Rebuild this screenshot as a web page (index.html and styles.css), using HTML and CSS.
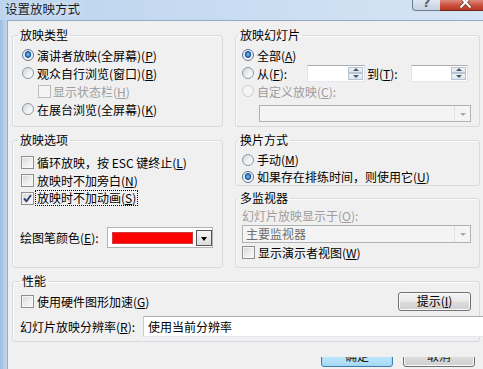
FILE: index.html
```html
<!DOCTYPE html>
<html lang="zh-CN">
<head>
<meta charset="utf-8">
<title>设置放映方式</title>
<link rel="stylesheet" href="styles.css">
</head>
<body>
<div class="window">
  <div class="titlebar">
    <span class="title">设置放映方式</span>
    <div class="caption-btns">
      <span class="cbtn help"><span class="q">?</span></span>
      <span class="cbtn close">
        <svg width="43" height="11" viewBox="0 0 43 11"><path d="M20.5 -3 L30.5 7.5 M30.5 -3 L20.5 7.5" stroke="#6b2a20" stroke-width="3.4" fill="none"/><path d="M20.5 -3 L30.5 7.5 M30.5 -3 L20.5 7.5" stroke="#fff" stroke-width="2.2" fill="none"/></svg>
      </span>
    </div>
  </div>
  <div class="frame">
    <div class="client">
      <div class="grid">
        <fieldset class="group">
          <legend>放映类型</legend>
          <div class="gbody pad-type">
            <div class="row"><span class="radio on"></span><span>演讲者放映(全屏幕)(<u>P</u>)</span></div>
            <div class="row"><span class="radio"></span><span>观众自行浏览(窗口)(<u>B</u>)</span></div>
            <div class="row indent dis"><span class="chk dis"></span><span>显示状态栏(<u>H</u>)</span></div>
            <div class="row"><span class="radio"></span><span>在展台浏览(全屏幕)(<u>K</u>)</span></div>
          </div>
        </fieldset>

        <fieldset class="group right">
          <legend>放映幻灯片</legend>
          <div class="gbody pad-right">
            <div class="row"><span class="radio on"></span><span>全部(<u>A</u>)</span></div>
            <div class="row">
              <span class="radio"></span><span class="lbl-from">从(<u>F</u>):</span>
              <span class="spin w58"><span class="spin-btns"><span class="up"></span><span class="dn"></span></span></span>
              <span class="lbl-to">到(<u>T</u>):</span>
              <span class="spin w57"><span class="spin-btns"><span class="up"></span><span class="dn"></span></span></span>
            </div>
            <div class="row dis"><span class="radio dis"></span><span>自定义放映(<u>C</u>):</span></div>
            <div class="combo dis custom"><span class="combo-text"></span><span class="combo-arrow"></span></div>
          </div>
        </fieldset>

        <fieldset class="group">
          <legend>放映选项</legend>
          <div class="gbody pad-opts">
            <div class="row"><span class="chk"></span><span>循环放映，按 ESC 键终止(<u>L</u>)</span></div>
            <div class="row"><span class="chk"></span><span>放映时不加旁白(<u>N</u>)</span></div>
            <div class="row"><span class="chk on"><svg width="11" height="11" viewBox="0 0 11 11"><path d="M2 5.5 L4.5 8.2 L9 2" stroke="#2f4277" stroke-width="1.9" fill="none"/></svg></span><span class="focus">放映时不加动画(<u>S</u>)</span></div>
            <div class="pen-row">
              <span class="pen-lbl">绘图笔颜色(<u>E</u>):</span>
              <span class="picker"><span class="swatch"></span><span class="pick-btn"></span></span>
            </div>
          </div>
        </fieldset>

        <div class="rightstack">
          <fieldset class="group right">
            <legend>换片方式</legend>
            <div class="gbody pad-adv">
              <div class="row r17"><span class="radio"></span><span>手动(<u>M</u>)</span></div>
              <div class="row r17"><span class="radio on"></span><span>如果存在排练时间，则使用它(<u>U</u>)</span></div>
            </div>
          </fieldset>
          <fieldset class="group right grow">
            <legend>多监视器</legend>
            <div class="gbody pad-mon">
              <div class="row r17 dis"><span>幻灯片放映显示于(<u>O</u>):</span></div>
              <div class="combo dis monitor"><span class="combo-text">主要监视器</span><span class="combo-arrow"></span></div>
              <div class="row r19"><span class="chk"></span><span>显示演示者视图(<u>W</u>)</span></div>
            </div>
          </fieldset>
        </div>

        <fieldset class="group perf">
          <legend>性能</legend>
          <div class="gbody pad-perf">
            <div class="perf-row">
              <div class="row"><span class="chk"></span><span>使用硬件图形加速(<u>G</u>)</span></div>
              <span class="btn tip">提示(<u>I</u>)</span>
            </div>
            <div class="res-row">
              <span class="res-lbl">幻灯片放映分辨率(<u>R</u>):</span>
              <span class="res-input">使用当前分辨率</span>
            </div>
          </div>
        </fieldset>
      </div>

      <div class="btnrow">
        <span class="btn dlg default">确定</span>
        <span class="btn dlg">取消</span>
      </div>
    </div>
  </div>
</div>
</body>
</html>
```

FILE: styles.css
```css
* { box-sizing: border-box; }
html, body { margin: 0; padding: 0; }
body {
  width: 483px;
  height: 369px;
  overflow: hidden;
  font-family: "Noto Sans CJK SC", "Noto Sans", sans-serif;
  font-size: 12px;
  color: #000;
}
u { text-decoration: underline; text-underline-offset: 1px; }

.window {
  width: 483px;
  height: 369px;
  display: flex;
  flex-direction: column;
  background: linear-gradient(90deg, #bcd4ee 0%, #c9dcf1 50%, #d6e5f5 100%);
}

.titlebar {
  height: 20px;
  display: flex;
  justify-content: space-between;
  align-items: flex-start;
  flex: none;
}
.title {
  padding-left: 5px;
  line-height: 17px;
  font-size: 12.5px;
  color: #1b1b1b;
  text-shadow: 0 0 6px #eef5fc;
  white-space: nowrap;
}
.caption-btns { display: flex; }
.cbtn { display: flex; height: 11px; overflow: hidden; }
.help {
  width: 28px;
  border: 1px solid #6e7e92;
  border-top: none;
  border-right: none;
  border-radius: 0 0 0 4px;
  background: linear-gradient(#dfe7f0, #c3d1e1);
  justify-content: center;
  align-items: flex-end;
}
.help .q {
  font-family: "DejaVu Sans", sans-serif;
  font-weight: bold;
  font-size: 13px;
  line-height: 13px;
  color: #55657a;
  margin-bottom: 1px;
}
.close {
  width: 43px;
  border-bottom: 1px solid #6f2418;
  background: linear-gradient(#e08c7c, #c94a36 60%, #b83a27);
}

.frame {
  flex: 1;
  display: flex;
  padding-left: 7px;
  background: linear-gradient(90deg, #9dbde2 0, #b4cdea 4px, #c3d7ee 7px);
}
.client {
  flex: 1;
  min-width: 0;
  background: #f0f0f0;
  border-top: 1px solid #94abc6;
  border-left: 1px solid #94abc6;
  padding: 7px 3px 0 4px;
  display: flex;
  flex-direction: column;
}

.grid {
  display: grid;
  grid-template-columns: 211px 245px;
  grid-template-rows: 99px 135px 68px;
  column-gap: 12px;
  row-gap: 6px;
}

.group {
  margin: 0;
  padding: 0;
  min-width: 0;
  border: 1px solid #d5dbe0;
  border-radius: 3px;
  box-shadow: inset 1px 1px 0 #fbfbfb;
}
.group legend {
  font-size: 12px;
  line-height: 14px;
  padding: 0 2px;
  margin-left: 5px;
}
.group.right legend { margin-left: 2px; }
.group.perf { grid-column: 1 / span 2; }
.group.perf legend { margin-left: 7px; }

.rightstack { display: flex; flex-direction: column; gap: 5px; }
.rightstack .grow { flex: 1; }

.gbody { display: flex; flex-direction: column; }
.pad-type { padding: 4px 0 0 9px; }
.pad-right { padding: 4px 0 0 6px; }
.pad-opts { padding: 6px 0 0 8px; }
.pad-adv { padding: 4px 0 0 6px; }
.pad-mon { padding: 2px 0 0 6px; }
.pad-perf { padding: 3px 8px 0 7px; }

.row {
  display: flex;
  align-items: center;
  height: 18px;
  white-space: nowrap;
}
.row.r17 { height: 17px; }
.row.r19 { height: 19px; }
.row.indent { padding-left: 16px; }
.dis { color: #9d9d9d; }

.radio {
  flex: none;
  width: 12px;
  height: 12px;
  border-radius: 50%;
  border: 1px solid #8d96a0;
  background: linear-gradient(135deg, #d2d7dc 0%, #eef0f2 55%, #ffffff 100%);
  margin-right: 3px;
}
.radio.on {
  border-color: #5a7390;
  background: radial-gradient(circle at 50% 45%, #8fd0f6 0, #3f86cf 1.6px, #1b4f93 3px, #e3eaf2 3.6px, #f4f6f8 4.6px, #ffffff 6px);
}
.radio.dis {
  border-color: #c8cdd2;
  background: #f4f4f4;
}

.chk {
  flex: none;
  width: 13px;
  height: 13px;
  border: 1px solid #8e8f8f;
  background: linear-gradient(135deg, #d4d4d4 0%, #ececec 50%, #fbfbfb 100%);
  box-shadow: inset 0 0 0 1px #f6f6f6;
  margin-right: 3px;
  display: flex;
  align-items: center;
  justify-content: center;
}
.chk.dis {
  border-color: #bcbcbc;
  background: #f4f4f4;
  box-shadow: none;
  margin-right: 2px;
}
.chk.on svg { display: block; }

.focus {
  outline: 1px dotted #000;
  outline-offset: 0;
  line-height: 14px;
  padding: 0 1px;
  margin-left: -1px;
}

.lbl-from { width: 50px; flex: none; }
.lbl-to { width: 46px; padding-left: 2px; flex: none; }
.spin {
  flex: none;
  height: 17px;
  background: #fff;
  border: 1px solid #abadb3;
  border-left-color: #e2e3ea;
  border-right-color: #dbdfe6;
  border-bottom-color: #e3e9ef;
  display: flex;
  justify-content: flex-end;
  padding: 1px;
}
.spin.w58 { width: 58px; }
.spin.w57 { width: 57px; }
.spin-btns {
  width: 15px;
  display: flex;
  flex-direction: column;
}
.spin-btns span {
  flex: 1;
  border: 1px solid #b6c3d2;
  background: linear-gradient(#f2f5f9, #dbe3ec);
  display: flex;
  align-items: center;
  justify-content: center;
}
.spin-btns .up::before {
  content: "";
  border: 3px solid transparent;
  border-bottom: 3px solid #4a5868;
  border-top: none;
}
.spin-btns .dn::before {
  content: "";
  border: 3px solid transparent;
  border-top: 3px solid #4a5868;
  border-bottom: none;
}

.combo {
  display: flex;
  align-items: center;
  border: 1px solid #adb2b5;
  background: #f4f4f4;
}
.combo.custom {
  width: 212px;
  height: 17px;
  margin: 5px 0 0 17px;
}
.combo.monitor {
  width: 229px;
  height: 18px;
  margin-top: 1px;
}
.combo-text { flex: 1; padding-left: 3px; color: #6d6d6d; line-height: 14px; white-space: nowrap; }
.combo-arrow {
  width: 16px;
  align-self: stretch;
  border-left: 1px solid #dfe2e4;
  display: flex;
  align-items: center;
  justify-content: center;
}
.combo-arrow::before {
  content: "";
  border: 3.5px solid transparent;
  border-top: 3.5px solid #a6a6a6;
  border-bottom: none;
  margin-top: 1px;
}

.pen-row {
  display: flex;
  align-items: center;
  margin-top: 20px;
  margin-left: -1px;
  height: 21px;
}
.pen-lbl { width: 87px; flex: none; white-space: nowrap; }
.picker {
  flex: none;
  width: 106px;
  height: 21px;
  border: 1px solid #b3b3b3;
  background: #fff;
  display: flex;
  align-items: center;
  padding-left: 4px;
}
.swatch {
  width: 81px;
  height: 12px;
  background: #ff0000;
  border: 1px solid #d23b3b;
  margin-right: 3px;
}
.pick-btn {
  width: 16px;
  height: 16px;
  border: 1px solid #555;
  background: linear-gradient(#f6f6f6, #dcdcdc);
  display: flex;
  align-items: center;
  justify-content: center;
}
.pick-btn::before {
  content: "";
  border: 3.5px solid transparent;
  border-top: 4px solid #000;
  border-bottom: none;
  margin-top: 2px;
}

.perf-row {
  display: flex;
  justify-content: space-between;
  align-items: center;
  height: 20px;
  padding-left: 1px;
}
.btn {
  display: flex;
  align-items: center;
  justify-content: center;
  border: 1px solid #707070;
  border-radius: 3px;
  background: linear-gradient(#f2f2f2 0%, #ebebeb 49%, #dddddd 51%, #cfcfcf 100%);
  box-shadow: inset 0 0 0 1px #fcfcfc;
  white-space: nowrap;
}
.btn.tip { width: 73px; height: 19px; line-height: 14px; }

.res-row {
  display: flex;
  align-items: center;
  margin-top: 5px;
  height: 21px;
}
.res-lbl { flex: none; width: 123px; white-space: nowrap; }
.res-input {
  flex: none;
  width: 345px;
  height: 21px;
  background: #fff;
  border: 1px solid #abadb3;
  border-left-color: #c9ccd3;
  border-bottom-color: #e3e9ef;
  padding-left: 4px;
  line-height: 19px;
  white-space: nowrap;
}

.btnrow {
  margin-top: 15px;
  height: 12px;
  overflow: hidden;
  display: flex;
  justify-content: flex-end;
  align-items: flex-end;
  gap: 10px;
  padding-right: 5px;
}
.btn.dlg {
  width: 72px;
  height: 22px;
  margin-bottom: 2px;
  line-height: 20px;
  color: #222;
}
.btn.default {
  border-color: #3c7fb1;
  box-shadow: inset 0 0 0 1px #a8d6f2;
  background: linear-gradient(#eaf6fd 0%, #d9f0fc 49%, #bee6fd 51%, #a7d9f5 100%);
}
```
